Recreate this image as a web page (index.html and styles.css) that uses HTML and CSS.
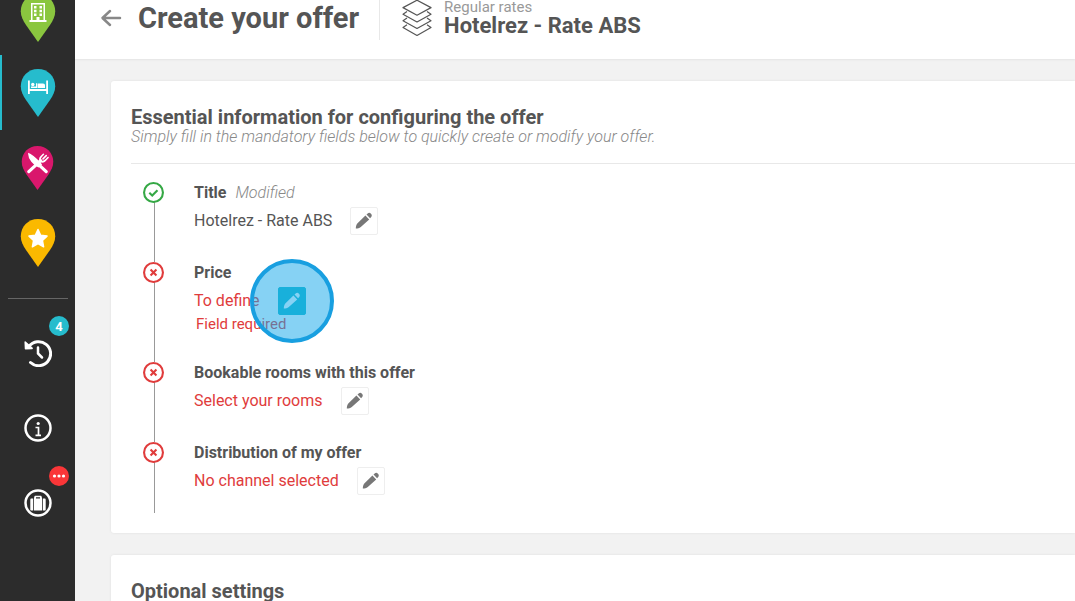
FILE: index.html
```html
<!DOCTYPE html>
<html lang="en">
<head>
    <meta charset="UTF-8">
    <meta name="viewport" content="width=device-width, initial-scale=1.0">
    <title>Create your offer</title>
    <link rel="stylesheet" href="styles.css">
</head>
<body>

    <!-- Shared icons -->
    <svg class="sprite" aria-hidden="true">
        <symbol id="pin" viewBox="0 0 36 48">
            <path d="M18 0C8 0 .8 7.600.8 17.300.8 22.500 3 26.500 6 31L18 48 30 31C33 26.500 35.200 22.500 35.200 17.300 35.200 7.600 28 0 18 0Z"/>
        </symbol>
        <symbol id="pencil" viewBox="0 0 18 18">
            <path d="M.8 16.600c0-2 .5-3.600 1.500-5L10.400 3.600l3.800 3.800-8.400 7.700c-1.500 1-3 1.500-5 1.500zM11.500 2.600l1.200-1.200c.9-.8 2.200-.8 3 0l.5.5c.8.8.8 2.100 0 3l-1.100 1.400z"/>
        </symbol>
        <symbol id="ok" viewBox="0 0 20 20">
            <circle cx="10" cy="10" r="9"/>
            <path d="M6 10.200l2.800 2.600 5-5"/>
        </symbol>
        <symbol id="error" viewBox="0 0 20 20">
            <circle cx="10" cy="10" r="9"/>
            <path d="M7.200 7.200l5.600 5.600M12.800 7.200l-5.600 5.600"/>
        </symbol>
    </svg>

    <!-- Sidebar -->
    <nav class="sidebar">
        <ul class="menu">
            <li>
                <a href="#" class="green" aria-label="Property">
                    <svg width="36" height="48" viewBox="0 0 36 48">
                        <use href="#pin"/>
                        <path fill="#fff" fill-rule="evenodd" d="M11 9h14v17h1.500v2h-17v-2H11zM12.500 10.500v15.500h4v-3h3v3h4V10.500zM14 12h2.500v2.500h-2.500zM19.500 12h2.500v2.500h-2.500zM14 15.700h2.500v2.500h-2.500zM19.500 15.700h2.500v2.500h-2.500zM14 19.400h2.500v2.500h-2.500zM19.500 19.400h2.500v2.500h-2.500z"/>
                    </svg>
                </a>
            </li>
            <li>
                <a href="#" class="blue active" aria-label="Rooms">
                    <svg width="36" height="48" viewBox="0 0 36 48">
                        <use href="#pin"/>
                        <path fill="#fff" d="M8 11.500h1.800v8.500h16.400v-8.500H28v13.500h-1.800v-3H9.800v3H8zM11 19v-1.500h5V14.300h1V19z"/>
                        <circle cx="12.800" cy="15.500" r="1.700" fill="#fff"/>
                        <path fill="#fff" d="M17.500 14.500h5.500c1.300 0 2 .8 2 2V19h-7.500z"/>
                    </svg>
                </a>
            </li>
            <li>
                <a href="#" class="pink" aria-label="Restaurant">
                    <svg width="33" height="44" viewBox="0 0 36 48">
                        <use href="#pin"/>
                        <g fill="none" stroke="#fff" stroke-linecap="round">
                            <path stroke-width="3.500" d="M8.500 28l13-12M19 20l8.500 8"/>
                            <path stroke-width="1.700" d="M21 16.500c-1.500-3 .5-4.500 3.500-7.500M24 14l3.500-3.500M21.500 17c3 1.500 5-1 8-4.500"/>
                            <path fill="#fff" stroke-width="1.500" d="M8.500 8.500c3 1 11 8 13.500 11.500l-3 2.500C14 20 8.500 14 8.500 8.500z"/>
                        </g>
                    </svg>
                </a>
            </li>
            <li>
                <a href="#" class="yellow" aria-label="Favourites">
                    <svg width="36" height="48" viewBox="0 0 36 48">
                        <use href="#pin"/>
                        <path fill="#fff" stroke="#fff" stroke-width="1.500" stroke-linejoin="round" d="M18 10.500l2.700 5.800 6.300.8-4.600 4.400 1.200 6.300-5.600-3.100-5.600 3.100 1.200-6.300L9 17.100l6.300-.8z"/>
                    </svg>
                </a>
            </li>
        </ul>
        <hr>
        <ul class="tools">
            <li>
                <a href="#" aria-label="History">
                    <svg width="28" height="28" viewBox="0 0 28 28" fill="none" stroke="#fff" stroke-width="3" stroke-linecap="round">
                        <path d="M5 7.500A12 12 0 1 1 6.500 23.500"/>
                        <path stroke-width="2.500" d="M14 8.500v6l4 4"/>
                        <path fill="#fff" stroke-width="1.500" stroke-linejoin="round" d="M1.200 3l.3 6.700 6.700-.3z"/>
                    </svg>
                    <span class="badge">4</span>
                </a>
            </li>
            <li>
                <a href="#" aria-label="Information">
                    <svg width="28" height="28" viewBox="0 0 28 28" fill="none" stroke="#fff">
                        <circle cx="14" cy="14" r="12.500" stroke-width="2.500"/>
                        <circle cx="14.200" cy="9.500" r="1.600" fill="#fff" stroke="none"/>
                        <path stroke-width="1.700" d="M11.500 13.500h3v8M11.500 21.300h5.500"/>
                    </svg>
                </a>
            </li>
            <li>
                <a href="#" aria-label="Travel">
                    <svg width="28" height="28" viewBox="0 0 28 28">
                        <circle cx="14" cy="14" r="12.500" fill="none" stroke="#fff" stroke-width="2.500"/>
                        <path fill="#fff" fill-rule="evenodd" d="M10.300 8.600V8c0-.8.500-1.300 1.300-1.300h4.800c.8 0 1.300.5 1.300 1.300v.6h.3v13h-8V8.600zM12 8.200V9.400h4V8.200zM6.300 10.800c0-.8.500-1.200 1.200-1.200h1.700V21.600H7.500c-.8 0-1.200-.500-1.200-1.200zM18.800 9.600h1.700c.8 0 1.200.5 1.200 1.200v9.600c0 .8-.5 1.200-1.200 1.200h-1.700z"/>
                    </svg>
                    <span class="badge red">
                        <svg width="14" height="4" viewBox="0 0 14 4" fill="#fff">
                            <circle cx="2.500" cy="2" r="1.600"/>
                            <circle cx="7" cy="2" r="1.600"/>
                            <circle cx="11.500" cy="2" r="1.600"/>
                        </svg>
                    </span>
                </a>
            </li>
        </ul>
    </nav>

    <!-- Main Content -->
    <div class="main-content">
        <header class="topbar">
            <button class="back-btn" aria-label="Back">
                <svg width="22" height="20" viewBox="0 0 22 20" fill="none" stroke="#888" stroke-width="2.500" stroke-linecap="round" stroke-linejoin="round">
                    <path d="M20 10H3M10 3l-7.500 7 7.500 7"/>
                </svg>
            </button>
            <h1>Create your offer</h1>
            <div class="rate">
                <svg width="30" height="38" viewBox="0 0 30 38" fill="none" stroke="#555" stroke-width="1.200" stroke-linejoin="round">
                    <path d="M15 .2L29 7.600 15 15.200 1 7.600z"/>
                    <path d="M5 11.500l-4 2.700 14 7.800 14-7.800-4-2.700"/>
                    <path d="M5 18l-4 2.700 14 7.800 14-7.800-4-2.700"/>
                    <path d="M5 24.700l-4 2.700 14 8 14-8-4-2.700"/>
                </svg>
                <div>
                    <p class="rate-type">Regular rates</p>
                    <p class="rate-name">Hotelrez - Rate ABS</p>
                </div>
            </div>
        </header>

        <main class="cards">
            <section class="card">
                <h2>Essential information for configuring the offer</h2>
                <p class="subtitle">Simply fill in the mandatory fields below to quickly create or modify your offer.</p>

                <ul class="steps">
                    <li class="step done">
                        <svg class="status"><use href="#ok"/></svg>
                        <h3>Title <em>Modified</em></h3>
                        <div class="value">
                            <span>Hotelrez - Rate ABS</span>
                            <button class="edit" aria-label="Edit title"><svg><use href="#pencil"/></svg></button>
                        </div>
                    </li>
                    <li class="step missing">
                        <svg class="status"><use href="#error"/></svg>
                        <h3>Price</h3>
                        <div class="value">
                            <span>To define</span>
                            <button class="edit selected" aria-label="Edit price"><svg><use href="#pencil"/></svg></button>
                        </div>
                        <p class="error">Field required</p>
                    </li>
                    <li class="step missing">
                        <svg class="status"><use href="#error"/></svg>
                        <h3>Bookable rooms with this offer</h3>
                        <div class="value">
                            <span>Select your rooms</span>
                            <button class="edit" aria-label="Edit rooms"><svg><use href="#pencil"/></svg></button>
                        </div>
                    </li>
                    <li class="step missing">
                        <svg class="status"><use href="#error"/></svg>
                        <h3>Distribution of my offer</h3>
                        <div class="value">
                            <span>No channel selected</span>
                            <button class="edit" aria-label="Edit distribution"><svg><use href="#pencil"/></svg></button>
                        </div>
                    </li>
                </ul>
            </section>

            <section class="card">
                <h2>Optional settings</h2>
            </section>
        </main>
    </div>

</body>
</html>
```
FILE: styles.css
```css
/* General Styles */
* {
    margin: 0;
    padding: 0;
    box-sizing: border-box;
    font-family: Roboto, Arial, sans-serif;
}

body {
    display: flex;
    height: 100vh;
    overflow: hidden;
    background-color: #f2f2f2;
    color: #555;
    font-size: 16px;
}

ul {
    list-style: none;
}

button {
    border: none;
    background: none;
    cursor: pointer;
}

.sprite {
    position: absolute;
    width: 0;
    height: 0;
}

/* Sidebar Navigation */
.sidebar {
    width: 75px;
    flex-shrink: 0;
    background-color: #2c2c2c;
    overflow: hidden;
}

.menu {
    margin-top: -20px;
}

.menu a,
.tools a {
    display: flex;
    align-items: center;
    justify-content: center;
    position: relative;
    height: 75px;
}

.tools a {
    padding-left: 1px;
}

.menu .active {
    box-shadow: inset 2px 0 0 #26bccd;
}

.green {
    fill: #8ac63f;
}

.blue {
    fill: #26bccd;
}

.pink {
    fill: #d9176c;
}

.yellow {
    fill: #fbb900;
}

.sidebar hr {
    margin: 18px 7px 16px 8px;
    border: none;
    border-top: 1px solid #666;
}

.badge {
    position: absolute;
    top: 1px;
    right: 6px;
    display: flex;
    align-items: center;
    justify-content: center;
    width: 20px;
    height: 20px;
    border-radius: 50%;
    background-color: #26bccd;
    color: #fff;
    font-size: 13px;
    font-weight: bold;
}

.badge.red {
    background-color: #fa3638;
}

/* Main Content */
.main-content {
    flex: 1;
    min-width: 0;
}

.topbar {
    display: flex;
    padding: 0 25px 19px;
    background-color: #fff;
    box-shadow: 0 1px 2px rgba(0, 0, 0, 0.06);
}

.back-btn {
    display: flex;
    align-items: center;
    height: 36px;
    margin-right: 16px;
}

.topbar h1 {
    font-size: 29px;
    line-height: 36px;
    white-space: nowrap;
}

.rate {
    display: flex;
    gap: 12px;
    height: 40px;
    margin-left: 20px;
    padding-left: 22px;
    border-left: 1px solid #e8e8e8;
    white-space: nowrap;
}

.rate-type {
    font-size: 15px;
    line-height: 15px;
    color: #999;
}

.rate-name {
    font-size: 22px;
    line-height: 22px;
    font-weight: bold;
}

/* Cards */
.cards {
    display: flex;
    flex-direction: column;
    gap: 22px;
    padding: 22px 0 0 36px;
}

.card {
    padding: 26px 0 20px 20px;
    background-color: #fff;
    border-radius: 3px 0 0 3px;
    box-shadow: 0 0 3px rgba(0, 0, 0, 0.08);
}

.card h2 {
    font-size: 20px;
    line-height: 20px;
}

.subtitle {
    padding-bottom: 17px;
    border-bottom: 1px solid #e8e8e8;
    color: #888;
    font-size: 16px;
    font-style: italic;
    font-weight: 300;
    line-height: 19px;
}

/* Steps */
.steps {
    padding: 18px 0 0 12px;
}

.step {
    position: relative;
    padding: 0 0 27px 51px;
}

.step::before {
    content: "";
    position: absolute;
    top: 20px;
    bottom: 0;
    left: 11px;
    width: 1px;
    background-color: #999;
}

.step:last-child {
    padding-bottom: 18px;
}

.status {
    position: absolute;
    top: 0;
    left: 0;
    width: 21px;
    height: 21px;
    fill: none;
    stroke: #e03c3c;
    stroke-width: 2;
}

.done .status {
    stroke: #35a845;
}

.step h3 {
    margin-bottom: 3px;
    font-size: 16px;
    line-height: 22px;
}

.step em {
    margin-left: 5px;
    color: #888;
    font-weight: 300;
}

.value {
    display: flex;
    align-items: center;
    gap: 18px;
    height: 28px;
}

.value span {
    padding-bottom: 2px;
}

.missing .value,
.error {
    color: #e03c3c;
}

.error {
    padding-left: 2px;
    font-size: 15px;
    line-height: 18px;
    margin-bottom: 2px;
}

.edit {
    display: flex;
    align-items: center;
    justify-content: center;
    position: relative;
    width: 28px;
    height: 28px;
    border: 1px solid #eee;
    border-radius: 2px;
    fill: #777;
}

.edit svg {
    width: 18px;
    height: 18px;
}

.edit.selected {
    border-color: #22bbcc;
    background-color: #22bbcc;
    fill: #fff;
}

/* Click highlight around the selected button */
.edit.selected::after {
    content: "";
    position: absolute;
    inset: -29px;
    border: 4px solid #189fe0;
    border-radius: 50%;
    background-color: rgba(14, 165, 233, 0.5);
}
```
